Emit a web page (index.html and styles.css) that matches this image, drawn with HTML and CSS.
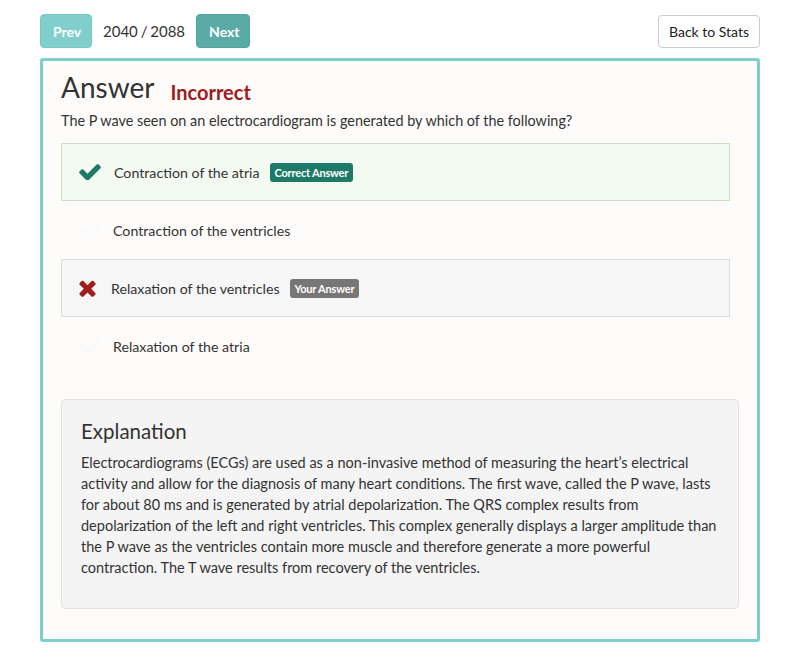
FILE: index.html
```html
<!DOCTYPE html>
<html>
<head>
<meta charset="utf-8">
<link rel="stylesheet" href="styles.css">
</head>
<body>
<div class="page">
  <div class="toolbar">
    <div class="nav">
      <button class="btn btn-prev">Prev</button>
      <span class="counter">2040 / 2088</span>
      <button class="btn btn-next">Next</button>
    </div>
    <button class="btn btn-back">Back to Stats</button>
  </div>
  <div class="card">
    <div class="title-row">
      <h1 class="title">Answer</h1>
      <span class="status">Incorrect</span>
    </div>
    <p class="question">The P wave seen on an electrocardiogram is generated by which of the following?</p>
    <div class="options">
      <div class="option option-correct">
        <svg class="icon icon-check" viewBox="110 360 1570 1080"><path d="M1671 566q0 40-28 68l-724 724-136 136q-28 28-68 28t-68-28l-136-136-362-362q-28-28-28-68t28-68l136-136q28-28 68-28t68 28l294 295 656-657q28-28 68-28t68 28l136 136q28 28 28 68z"/></svg>
        <span class="opt-text">Contraction of the atria</span>
        <span class="badge badge-correct">Correct Answer</span>
      </div>
      <div class="option">
        <svg class="icon icon-faint" viewBox="110 360 1570 1080"><path d="M1671 566q0 40-28 68l-724 724-136 136q-28 28-68 28t-68-28l-136-136-362-362q-28-28-28-68t28-68l136-136q28-28 68-28t68 28l294 295 656-657q28-28 68-28t68 28l136 136q28 28 28 68z"/></svg>
        <span class="opt-text">Contraction of the ventricles</span>
      </div>
      <div class="option option-wrong">
        <svg class="icon icon-x" viewBox="110 312 1188 1242"><path d="M1298 1322q0 40-28 68l-136 136q-28 28-68 28t-68-28l-294-294-294 294q-28 28-68 28t-68-28l-136-136q-28-28-28-68t28-68l294-294-294-294q-28-28-28-68t28-68l136-136q28-28 68-28t68 28l294 294 294-294q28-28 68-28t68 28l136 136q28 28 28 68t-28 68l-294 294 294 294q28 28 28 68z"/></svg>
        <span class="opt-text">Relaxation of the ventricles</span>
        <span class="badge badge-yours">Your Answer</span>
      </div>
      <div class="option">
        <svg class="icon icon-faint" viewBox="110 360 1570 1080"><path d="M1671 566q0 40-28 68l-724 724-136 136q-28 28-68 28t-68-28l-136-136-362-362q-28-28-28-68t28-68l136-136q28-28 68-28t68 28l294 295 656-657q28-28 68-28t68 28l136 136q28 28 28 68z"/></svg>
        <span class="opt-text">Relaxation of the atria</span>
      </div>
    </div>
    <div class="explanation">
      <h2 class="exp-title">Explanation</h2>
      <p class="exp-text">Electrocardiograms (ECGs) are used as a non-invasive method of measuring the heart’s electrical activity and allow for the diagnosis of many heart conditions. The first wave, called the P wave, lasts for about 80 ms and is generated by atrial depolarization. The QRS complex results from depolarization of the left and right ventricles. This complex generally displays a larger amplitude than the P wave as the ventricles contain more muscle and therefore generate a more powerful contraction. The T wave results from recovery of the ventricles.</p>
    </div>
  </div>
</div>
</body>
</html>
```

FILE: styles.css
```css
* { box-sizing: border-box; }
html, body { margin: 0; padding: 0; background: #ffffff; }
body {
  font-family: Lato, "Open Sans", sans-serif;
  color: #333333;
  font-size: 14px;
}
.page {
  width: 720px;
  margin-left: 40px;
  padding-top: 14px;
}
.toolbar {
  display: flex;
  justify-content: space-between;
  align-items: flex-start;
  height: 44px;
}
.nav {
  display: flex;
  align-items: center;
  gap: 11px;
}
.btn {
  font-family: Lato, sans-serif;
  font-size: 14px;
  border-radius: 4px;
  height: 34px;
  padding: 0 12px;
  border: 1px solid transparent;
  cursor: pointer;
}
.btn-prev {
  background: #80cfcc;
  color: #ffffff;
  font-weight: bold;
  width: 52px;
  border-color: #78c8c5;
}
.btn-next {
  background: #5aaaa6;
  color: #ffffff;
  font-weight: bold;
  width: 54px;
  border-color: #55a39f;
}
.counter {
  font-size: 15px;
  color: #333;
  word-spacing: -1px;
}
.btn-back {
  background: #ffffff;
  border-color: #cccccc;
  color: #222;
  width: 102px;
  height: 33px;
  margin-top: 1px;
  padding: 0;
}
.card {
  border: 3px solid #7ecfcc;
  border-radius: 3px;
  background: #fdfcfa;
  padding: 8px 18px 30px 18px;
}
.title-row {
  display: flex;
  align-items: baseline;
  gap: 16px;
}
.title {
  font-size: 28px;
  font-weight: normal;
  margin: 0;
  line-height: 36px;
  color: #333;
}
.status {
  font-size: 20px;
  font-weight: bold;
  color: #a01b1b;
  position: relative;
  top: 2px;
}
.question {
  margin: 6px 0 12px 0;
  line-height: 20px;
  font-size: 14.4px;
}
.options {
  width: 669px;
}
.option {
  display: flex;
  align-items: center;
  height: 58px;
  padding-left: 17px;
  border: 1px solid transparent;
  font-size: 14.2px;
}
.option-correct {
  background: #f3faf2;
  border-color: #c6e3c3;
}
.option-wrong {
  background: #f6f6f6;
  border-color: #dddddd;
}
.icon {
  width: 22px;
  height: 16px;
  fill: currentColor;
  margin-right: 13px;
  flex-shrink: 0;
}
.icon-check { color: #1d7a68; }
.icon-faint { color: #fafafa; margin-right: 12px; }
.icon-x {
  color: #a01b1b;
  width: 17px;
  height: 17px;
  margin-right: 15px;
}
.opt-text {
  color: #333;
}
.badge {
  display: inline-block;
  margin-left: 10px;
  color: #fff;
  font-size: 11px;
  font-weight: bold;
  padding: 3px 5px;
  border-radius: 3px;
  line-height: 13px;
  letter-spacing: -0.2px;
}
.badge-correct { background: #1d7a68; }
.badge-yours { background: #777777; }
.explanation {
  margin-top: 24px;
  width: 678px;
  background: #f4f4f4;
  border: 1px solid #e3e3e3;
  border-radius: 4px;
  padding: 17px 19px 30px 19px;
}
.exp-title {
  font-size: 20.5px;
  font-weight: normal;
  margin: 0 0 7px 0;
  line-height: 28px;
  color: #333;
}
.exp-text {
  margin: 0;
  line-height: 21px;
  font-size: 14.5px;
}
```
